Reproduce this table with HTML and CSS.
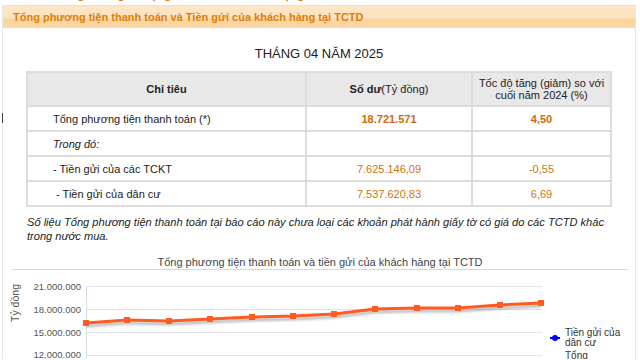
FILE: index.html
```html
<!DOCTYPE html>
<html lang="vi">
<head>
<meta charset="utf-8">
<title>Tổng phương tiện thanh toán</title>
<link rel="stylesheet" href="styles.css">
</head>
<body>
<div class="topstrip"><div class="topstrip-text">Tăng trưởng tín dụng của các tổ chức tín dụng đối với nền kinh tế</div></div>
<div class="panel">
  <div class="panel-head">Tổng phương tiện thanh toán và Tiền gửi của khách hàng tại TCTD</div>
  <div class="panel-body">
    <div class="period">THÁNG 04 NĂM 2025</div>
    <table class="data">
      <thead>
        <tr>
          <th class="c1"><b>Chỉ tiêu</b></th>
          <th class="c2"><b>Số dư</b>(Tỷ đồng)</th>
          <th class="c3">Tốc độ tăng (giảm) so với<br>cuối năm 2024 (%)</th>
        </tr>
      </thead>
      <tbody>
        <tr>
          <td class="label">Tổng phương tiện thanh toán (*)</td>
          <td class="num strong">18.721.571</td>
          <td class="num strong">4,50</td>
        </tr>
        <tr>
          <td class="label italic">Trong đó:</td>
          <td class="num"></td>
          <td class="num"></td>
        </tr>
        <tr>
          <td class="label">- Tiền gửi của các TCKT</td>
          <td class="num">7.625.146,09</td>
          <td class="num">-0,55</td>
        </tr>
        <tr>
          <td class="label">&nbsp;- Tiền gửi của dân cư</td>
          <td class="num">7.537.620,83</td>
          <td class="num">6,69</td>
        </tr>
      </tbody>
    </table>
    <p class="note">Số liệu Tổng phương tiện thanh toán tại báo cáo này chưa loại các khoản phát hành giấy tờ có giá do các TCTD khác trong nước mua.</p>
    <div class="chart-title">Tổng phương tiện thanh toán và tiền gửi của khách hàng tại TCTD</div>
    <svg class="chart" width="633" height="89" viewBox="0 0 633 89">
      <defs>
        <filter id="sh" x="-5%" y="-50%" width="110%" height="200%">
          <feGaussianBlur stdDeviation="1.2"/>
        </filter>
      </defs>
      <g stroke="#e2e2ea" stroke-width="1">
        <line x1="83" y1="16.5" x2="539" y2="16.5"/>
        <line x1="83" y1="39.5" x2="539" y2="39.5"/>
        <line x1="83" y1="62.5" x2="539" y2="62.5"/>
        <line x1="83" y1="85.5" x2="539" y2="85.5"/>
      </g>
      <line x1="83.5" y1="16" x2="83.5" y2="89" stroke="#d6dce6" stroke-width="1"/>
      <g class="ylab" text-anchor="end">
        <text x="78" y="20">21.000.000</text>
        <text x="78" y="43">18.000.000</text>
        <text x="78" y="66">15.000.000</text>
        <text x="78" y="88">12.000.000</text>
      </g>
      <text class="ytitle" transform="translate(16 33) rotate(-90)" text-anchor="middle">Tỷ đồng</text>
      <polyline points="83,56 124,53 166,54 207,52 249,50 290,49 331,47 372,42 414,41 455,41 497,38 538,36" fill="none" stroke="#000" stroke-opacity="0.25" stroke-width="3" filter="url(#sh)"/>
      <polyline points="83,53 124,50 166,51 207,49 249,47 290,46 331,44 372,39 414,38 455,38 497,35 538,33" fill="none" stroke="#ff5a1f" stroke-width="3" stroke-linejoin="round"/>
      <g fill="#ff5a1f">
        <rect x="80" y="50" width="6" height="6"/>
        <rect x="121" y="47" width="6" height="6"/>
        <rect x="163" y="48" width="6" height="6"/>
        <rect x="204" y="46" width="6" height="6"/>
        <rect x="246" y="44" width="6" height="6"/>
        <rect x="287" y="43" width="6" height="6"/>
        <rect x="328" y="41" width="6" height="6"/>
        <rect x="369" y="36" width="6" height="6"/>
        <rect x="411" y="35" width="6" height="6"/>
        <rect x="452" y="35" width="6" height="6"/>
        <rect x="494" y="32" width="6" height="6"/>
        <rect x="535" y="30" width="6" height="6"/>
      </g>
      <line x1="547" y1="68" x2="557" y2="68" stroke="#0000ff" stroke-width="2"/>
      <circle cx="552" cy="68" r="3" fill="#0000ff"/>
      <g class="legend">
        <text x="562" y="66">Tiền gửi của</text>
        <text x="562" y="76">dân cư</text>
        <text x="562" y="89">Tổng</text>
      </g>
    </svg>
  </div>
  <span class="caret"></span>
</div>
</body>
</html>
```
FILE: styles.css
```css
html, body {
  margin: 0;
  padding: 0;
  background: #ffffff;
}
body {
  font-family: "Liberation Sans", Arial, sans-serif;
  color: #222;
  width: 640px;
  height: 360px;
  overflow: hidden;
}
.topstrip {
  height: 4px;
  overflow: hidden;
  padding-left: 58px;
}
.topstrip-text {
  margin-top: -12px;
  font-size: 11px;
  line-height: 14px;
  font-weight: bold;
  color: #e07d0a;
  white-space: nowrap;
}
.panel {
  position: relative;
  margin-left: 2px;
  width: 632px;
  border-left: 1px solid #e6e6e6;
  border-right: 1px solid #e6e6e6;
  margin-top: 1px;
}
.panel-head {
  height: 22px;
  line-height: 22px;
  padding-left: 10px;
  font-size: 11px;
  font-weight: bold;
  color: #e07d0a;
  background: linear-gradient(to bottom, #fde6c6 0%, #fde2be 55%, #fbd6a2 60%, #fbd7a5 100%);
  border-top: 1px solid #f6dcb8;
}
.panel-body {
  padding: 0;
}
.period {
  text-align: center;
  font-size: 13px;
  line-height: 18px;
  padding-top: 17px;
  margin-bottom: 8px;
  color: #222;
}
.data {
  border-collapse: collapse;
  width: 586px;
  margin: 0 auto;
  font-size: 11px;
}
.data th, .data td {
  border: 2px solid #dcdcdc;
  padding: 0;
}
.data th {
  background: #e8e8e8;
  height: 32px;
  font-weight: normal;
  text-align: center;
  line-height: 12px;
  color: #222;
}
.data th b {
  font-weight: bold;
}
.data .c1 { width: 277px; }
.data .c2 { width: 164px; }
.data td {
  height: 23px;
  font-size: 11px;
}
.data td.label {
  padding-left: 25px;
  color: #222;
}
.data td.italic {
  font-style: italic;
}
.data td.num {
  text-align: center;
  color: #d2720f;
}
.data td.strong {
  font-weight: bold;
  color: #cc6a0c;
}
.note {
  margin: 8px 0 0 24px;
  width: 586px;
  font-size: 11.1px;
  line-height: 14px;
  font-style: italic;
  color: #222;
}
.chart-title {
  margin: 12px 7px 0 9px;
  text-align: center;
  font-size: 11px;
  line-height: 14px;
  color: #444;
  border-bottom: 1px solid #d4d8e4;
}
.chart {
  display: block;
  font-family: "Liberation Sans", Arial, sans-serif;
}
.ylab text {
  font-size: 9.5px;
  fill: #555;
}
.ytitle {
  font-size: 10.5px;
  fill: #555;
}
.legend text {
  font-size: 10px;
  fill: #333;
}
.caret {
  position: absolute;
  left: -1px;
  top: 108px;
  width: 1px;
  height: 10px;
  background: #444;
}
```
